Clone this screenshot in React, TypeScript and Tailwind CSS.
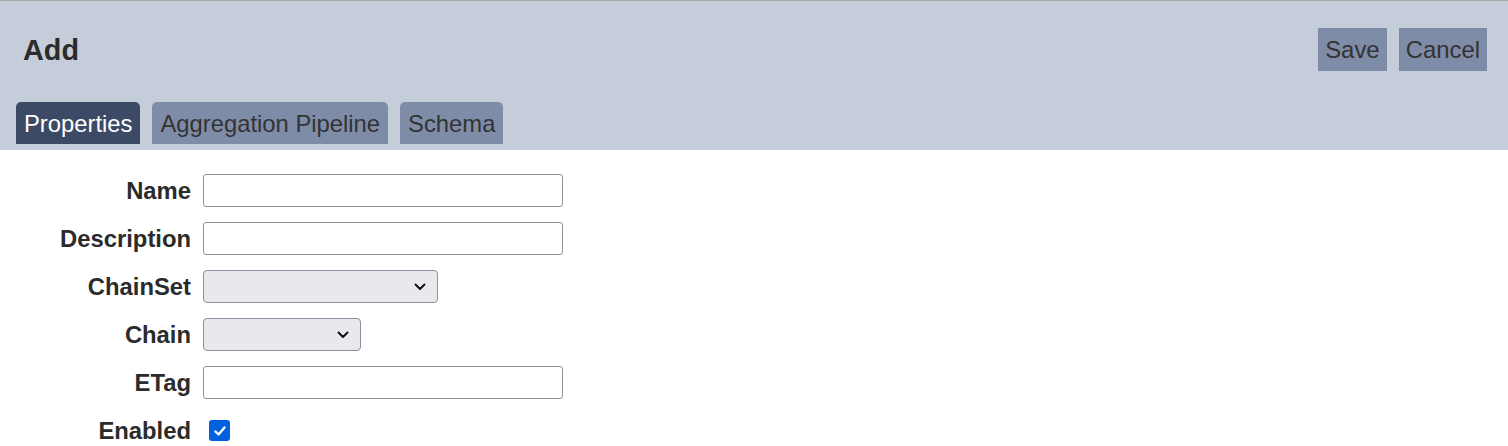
import React from "react";

const Chevron = () => (
  <svg width="12" height="8" viewBox="0 0 12 8" className="shrink-0">
    <path d="M1.5 1.5 L6 6 L10.5 1.5" fill="none" stroke="#111" strokeWidth="2" strokeLinecap="round" strokeLinejoin="round" />
  </svg>
);

function TextInput() {
  return <div className="w-[360px] h-[33px] border border-[#8f8f9d] rounded-[3px] bg-white" />;
}

function SelectBox({ w }: { w: string }) {
  return (
    <div className={`${w} h-[33px] border border-[#8f8f9d] rounded-[4px] bg-[#e9e9ed] flex items-center justify-end pr-[11px]`}>
      <Chevron />
    </div>
  );
}

export default function App() {
  const labelCls = "text-right font-bold text-[23.8px] text-[#2b2b2b] leading-none pt-[1px]";
  return (
    <div className="w-[1508px] h-[446px] bg-white overflow-hidden" style={{ fontFamily: '"Liberation Sans", Arial, sans-serif' }}>
      <div className="bg-[#c6cdda] border-t border-[#a9a9a9] pt-[27px] pb-[6px]">
        <div className="flex items-center justify-between pl-[23px] pr-[21px] h-[43px]">
          <div className="text-[28.8px] font-bold text-[#2b2b2b] leading-none pt-[1px]">Add</div>
          <div className="flex gap-3">
            <div className="h-[43px] px-[7px] bg-[#7f8ca8] text-[23.9px] text-[#333] flex items-center">Save</div>
            <div className="h-[43px] px-[7px] bg-[#7f8ca8] text-[23.9px] text-[#333] flex items-center">Cancel</div>
          </div>
        </div>
        <div className="flex gap-3 pl-4 mt-[31px]">
          <div className="h-[42px] px-2 pt-[2px] rounded-t-[5px] bg-[#3d4a66] text-white text-[23.8px] flex items-center">Properties</div>
          <div className="h-[42px] px-2 pt-[2px] rounded-t-[5px] bg-[#7f8ca8] text-[#333] text-[23.8px] flex items-center">Aggregation Pipeline</div>
          <div className="h-[42px] px-2 pt-[2px] rounded-t-[5px] bg-[#7f8ca8] text-[#333] text-[23.8px] flex items-center">Schema</div>
        </div>
      </div>
      <div className="grid grid-cols-[191px_auto] gap-x-3 gap-y-[15px] pt-6 items-center justify-start">
        <div className={labelCls}>Name</div>
        <TextInput />
        <div className={labelCls}>Description</div>
        <TextInput />
        <div className={labelCls}>ChainSet</div>
        <SelectBox w="w-[235px]" />
        <div className={labelCls}>Chain</div>
        <SelectBox w="w-[158px]" />
        <div className={labelCls}>ETag</div>
        <TextInput />
        <div className={labelCls}>Enabled</div>
        <div className="h-[33px] flex items-center pl-[6px]">
          <div className="w-[21px] h-[21px] rounded-[3px] bg-[#0060df] flex items-center justify-center">
            <svg width="14" height="14" viewBox="0 0 14 14">
              <path d="M2.5 7.5 L5.5 10.5 L11.5 3.5" fill="none" stroke="white" strokeWidth="2.4" strokeLinecap="round" strokeLinejoin="round" />
            </svg>
          </div>
        </div>
      </div>
    </div>
  );
}
